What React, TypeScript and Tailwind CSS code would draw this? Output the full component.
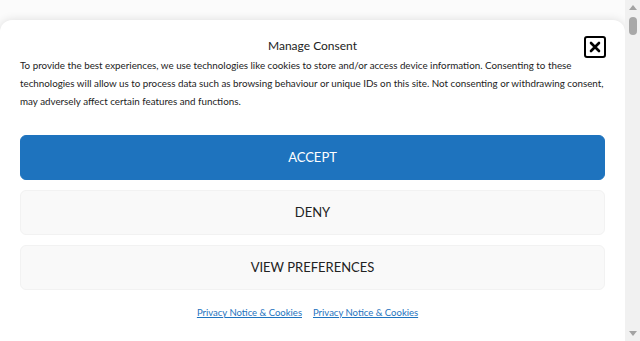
import React from 'react';

const ConsentButton = ({ label, primary }: { label: string; primary?: boolean }) => (
  <button
    className={`h-[45px] w-full rounded-md border text-[13px] ${
      primary
        ? 'bg-[#1e73be] border-[#1e73be] text-white'
        : 'bg-[#f9f9f9] border-[#f2f2f2] text-[#222]'
    }`}
  >
    {label}
  </button>
);

const App = () => {
  return (
    <div className="flex h-[341px] w-[640px] overflow-hidden bg-[#fbfbfb]" style={{ fontFamily: 'Lato, "Open Sans", sans-serif' }}>
      <div className="flex-1 pt-[20px]">
        <div className="h-[340px] rounded-xl bg-white px-[20px] pt-[16px] shadow-[0_0_10px_rgba(0,0,0,0.12)]">
          <div className="relative flex justify-center">
            <div className="text-[12px] leading-[20px] text-[#222]">Manage Consent</div>
            <button className="absolute right-[-1px] top-[0px] flex h-[22px] w-[22px] items-center justify-center rounded-[3px] border-2 border-black">
              <svg width="12" height="12" viewBox="0 0 12 12">
                <path d="M2 2L10 10M10 2L2 10" stroke="black" strokeWidth="2.6" strokeLinecap="round" />
              </svg>
            </button>
          </div>
          <p className="text-[9.8px] leading-[18px] text-[#222]">
            To provide the best experiences, we use technologies like cookies to store and/or access device information. Consenting to these technologies will allow us to process data such as browsing behaviour or unique IDs on this site. Not consenting or withdrawing consent, may adversely affect certain features and functions.
          </p>
          <div className="mt-[25px] flex flex-col gap-[10px]">
            <ConsentButton label="ACCEPT" primary />
            <ConsentButton label="DENY" />
            <ConsentButton label="VIEW PREFERENCES" />
          </div>
          <div className="mt-[16px] flex justify-center gap-[11px] pr-[10px] text-[9.5px] leading-[14px]">
            <a className="text-[#1e73be] underline">Privacy Notice &amp; Cookies</a>
            <a className="text-[#1e73be] underline">Privacy Notice &amp; Cookies</a>
          </div>
        </div>
      </div>
      <div className="flex w-[15px] flex-col items-center bg-[#f1f1f1]">
        <div className="flex h-[15px] w-full items-center justify-center">
          <svg width="8" height="5" viewBox="0 0 8 5"><path d="M0 5L4 0L8 5Z" fill="#a3a3a3" /></svg>
        </div>
        <div className="mt-[2px] h-[18px] w-[8px] rounded-full bg-[#a8a8a8]" />
        <div className="flex-1" />
        <div className="flex h-[15px] w-full items-center justify-center">
          <svg width="8" height="5" viewBox="0 0 8 5"><path d="M0 0L8 0L4 5Z" fill="#a3a3a3" /></svg>
        </div>
      </div>
    </div>
  );
};

export default App;
